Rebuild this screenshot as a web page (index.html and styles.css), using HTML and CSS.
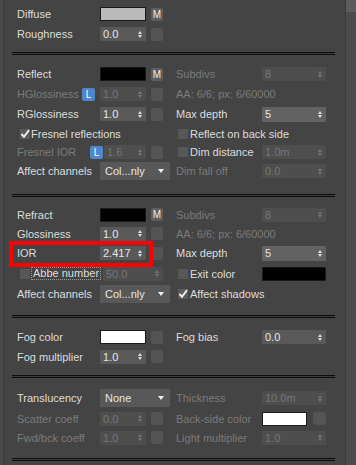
FILE: index.html
```html
<!DOCTYPE html>
<html>
<head>
  <title>Material</title>
  <link rel="stylesheet" href="styles.css">
</head>
<body>
  <div class="frame">
    <div class="edge"></div>
    <div class="panel">

      <div class="group g1">
        <div class="row r20">
          <div class="cl"><span class="lbl">Diffuse</span><span class="swatch grey"></span><span class="btn m">M</span></div>
        </div>
        <div class="row r20">
          <div class="cl"><span class="lbl">Roughness</span><span class="spin"><span>0.0</span><i class="arr"></i></span><span class="btn"></span></div>
        </div>
      </div>
      <div class="sep"></div>

      <div class="group g2">
        <div class="row r20">
          <div class="cl"><span class="lbl">Reflect</span><span class="swatch black"></span><span class="btn m">M</span></div>
          <div class="cr off"><span class="lbl">Subdivs</span><span class="spin wide dim"><span>8</span><i class="arr"></i></span></div>
        </div>
        <div class="row r20">
          <div class="cl"><span class="lbl off">HGlossiness</span><span class="lk">L</span><span class="spin dim"><span>1.0</span><i class="arr"></i></span><span class="btn"></span></div>
          <div class="cr off"><span class="lbl">AA: 6/6; px: 6/60000</span></div>
        </div>
        <div class="row r20">
          <div class="cl"><span class="lbl">RGlossiness</span><span class="spin"><span>1.0</span><i class="arr"></i></span><span class="btn"></span></div>
          <div class="cr"><span class="lbl">Max depth</span><span class="spin wide hi"><span>5</span><i class="arr"></i></span></div>
        </div>
        <div class="row r19">
          <div class="cl"><span class="chk on"><svg width="10" height="10" viewBox="0 0 10 10"><polyline points="1.5,5 4,7.8 9,1.2" fill="none" stroke="#eeeeee" stroke-width="2"/></svg></span><span class="lbl">Fresnel reflections</span></div>
          <div class="cr"><span class="chk r"></span><span class="lbl">Reflect on back side</span></div>
        </div>
        <div class="row r18">
          <div class="cl"><span class="lbl off">Fresnel IOR</span><span class="lk tight">L</span><span class="spin dim narrow"><span>1.6</span><i class="arr"></i></span><span class="btn"></span></div>
          <div class="cr"><span class="chk r"></span><span class="lbl">Dim distance</span><span class="spin wide dim"><span>1.0m</span><i class="arr"></i></span></div>
        </div>
        <div class="row r20">
          <div class="cl"><span class="lbl">Affect channels</span><span class="drop"><span>Col...nly</span><i class="tri"></i></span></div>
          <div class="cr off"><span class="lbl">Dim fall off</span><span class="spin wide dim"><span>0.0</span><i class="arr"></i></span></div>
        </div>
      </div>
      <div class="sep"></div>

      <div class="group g3">
        <div class="row r19">
          <div class="cl"><span class="lbl">Refract</span><span class="swatch black"></span><span class="btn m">M</span></div>
          <div class="cr off"><span class="lbl">Subdivs</span><span class="spin wide dim"><span>8</span><i class="arr"></i></span></div>
        </div>
        <div class="row r19">
          <div class="cl"><span class="lbl">Glossiness</span><span class="spin"><span>1.0</span><i class="arr"></i></span><span class="btn"></span></div>
          <div class="cr off"><span class="lbl">AA: 6/6; px: 6/60000</span></div>
        </div>
        <div class="row r20">
          <div class="cl marked"><span class="lbl">IOR</span><span class="spin"><span>2.417</span><i class="arr"></i></span><span class="btn"></span><span class="mark"></span></div>
          <div class="cr"><span class="lbl">Max depth</span><span class="spin wide hi"><span>5</span><i class="arr"></i></span></div>
        </div>
        <div class="row r21">
          <div class="cl"><span class="chk"></span><span class="lbl"><span class="focus">Abbe number</span></span><span class="spin dim long"><span>50.0</span><i class="arr"></i></span></div>
          <div class="cr"><span class="chk r"></span><span class="lbl">Exit color</span><span class="swatch black wide"></span></div>
        </div>
        <div class="row r20">
          <div class="cl"><span class="lbl">Affect channels</span><span class="drop"><span>Col...nly</span><i class="tri"></i></span></div>
          <div class="cr"><span class="chk r on"><svg width="10" height="10" viewBox="0 0 10 10"><polyline points="1.5,5 4,7.8 9,1.2" fill="none" stroke="#eeeeee" stroke-width="2"/></svg></span><span class="lbl">Affect shadows</span></div>
        </div>
      </div>
      <div class="sep"></div>

      <div class="group g4">
        <div class="row r20">
          <div class="cl"><span class="lbl">Fog color</span><span class="swatch white"></span><span class="btn"></span></div>
          <div class="cr"><span class="lbl">Fog bias</span><span class="spin wide"><span>0.0</span><i class="arr"></i></span></div>
        </div>
        <div class="row r19">
          <div class="cl"><span class="lbl">Fog multiplier</span><span class="spin"><span>1.0</span><i class="arr"></i></span><span class="btn"></span></div>
        </div>
      </div>
      <div class="sep"></div>

      <div class="group g5">
        <div class="row r22">
          <div class="cl"><span class="lbl">Translucency</span><span class="drop"><span>None</span><i class="tri"></i></span></div>
          <div class="cr off"><span class="lbl">Thickness</span><span class="spin wide dim"><span>10.0m</span><i class="arr"></i></span></div>
        </div>
        <div class="row r19">
          <div class="cl off"><span class="lbl">Scatter coeff</span><span class="spin dim"><span>0.0</span><i class="arr"></i></span><span class="btn"></span></div>
          <div class="cr off"><span class="lbl">Back-side color</span><span class="swatch white short"></span><span class="btn side"></span></div>
        </div>
        <div class="row r19">
          <div class="cl off"><span class="lbl">Fwd/bck coeff</span><span class="spin dim"><span>1.0</span><i class="arr"></i></span><span class="btn"></span></div>
          <div class="cr off"><span class="lbl">Light multiplier</span><span class="spin wide dim"><span>1.0</span><i class="arr"></i></span></div>
        </div>
      </div>
      <div class="sep"></div>

    </div>
    <div class="scroll"><div class="thumb"></div></div>
  </div>
</body>
</html>
```

FILE: styles.css
```css
body {
  margin: 0;
  background-color: #444444;
  font-family: "Liberation Sans", Arial, sans-serif;
  font-size: 11px;
  color: #dddddd;
}

.frame {
  display: flex;
  height: 465px;
  overflow: hidden;
}

.edge {
  width: 3px;
  background-color: #4a4a4a;
  border-right: 1px solid #393939;
}

.panel {
  flex: 1;
  padding-left: 8px;
}

.scroll {
  width: 10px;
  background-color: #4b4b4b;
  border-left: 1px solid #3a3a3a;
}

.thumb {
  height: 12px;
  background-color: #5c5c5c;
}

/* separators between groups */
.sep {
  width: 323px;
  height: 1px;
  background-color: #3c3c3c;
  border-top: 1px solid #0e0e0e;
  border-bottom: 1px solid #0e0e0e;
}

.group {
  padding-left: 5px;
}

.g1 { padding-top: 4px; padding-bottom: 8px; }
.g2 { padding-top: 9px; padding-bottom: 13px; }
.g3 { padding-top: 8px; padding-bottom: 11px; }
.g4 { padding-top: 9px; padding-bottom: 9px; }
.g5 { padding-top: 9px; padding-bottom: 11px; }

.row {
  display: flex;
  align-items: center;
}

.r18 { height: 18px; }
.r19 { height: 19px; }
.r20 { height: 20px; }
.r21 { height: 21px; }
.r22 { height: 22px; }

.cl {
  width: 153px;
  height: 100%;
  display: flex;
  align-items: center;
}

.cr {
  width: 150px;
  height: 100%;
  margin-left: 6px;
  display: flex;
  align-items: center;
}

.lbl {
  flex: 1;
  white-space: nowrap;
  overflow: hidden;
}

.off {
  color: #7b7b7b;
}

/* spinners */
.spin {
  width: 46px;
  height: 14px;
  box-sizing: border-box;
  padding: 0 3px;
  background-color: #595959;
  border-radius: 1px;
  display: flex;
  align-items: center;
  justify-content: space-between;
  color: #e6e6e6;
  white-space: nowrap;
}

.spin.dim {
  background-color: #4e4e4e;
  color: #777777;
}

.spin.hi {
  background-color: #626262;
  height: 15px;
}

.spin.wide { width: 64px; }
.spin.narrow { width: 42px; }
.spin.long { width: 60px; margin-right: 7px; }

.arr {
  display: flex;
  flex-direction: column;
  gap: 1px;
  margin-right: 1px;
}

.arr::before,
.arr::after {
  content: "";
  width: 0;
  height: 0;
  border-left: 2.5px solid transparent;
  border-right: 2.5px solid transparent;
}

.arr::before {
  border-bottom: 3px solid #dddddd;
}

.arr::after {
  border-top: 3px solid #dddddd;
}

.dim .arr::before { border-bottom-color: #777777; }
.dim .arr::after { border-top-color: #777777; }

/* colour swatches */
.swatch {
  width: 46px;
  height: 14px;
  box-sizing: border-box;
  border: 1px solid #1a1a1a;
}

.swatch.grey { background-color: #bababa; }
.swatch.black { background-color: #000000; }
.swatch.white { background-color: #ffffff; }
.swatch.wide { width: 64px; }
.swatch.short { width: 45px; }

/* map buttons */
.btn {
  width: 12px;
  height: 13px;
  margin-left: 5px;
  margin-right: 7px;
  border-radius: 2px;
  background-color: #545454;
}

.btn.m {
  background-color: #5e5e5e;
  color: #eeeeee;
  font-size: 10px;
  line-height: 13px;
  text-align: center;
}

.btn.side {
  width: 13px;
  margin-left: 6px;
  margin-right: 0;
}

.lk {
  width: 13px;
  height: 13px;
  margin-right: 5px;
  border-radius: 2px;
  background-color: #4f86cc;
  color: #ffffff;
  font-size: 10px;
  line-height: 13px;
  text-align: center;
}

.lk.tight {
  margin-right: 1px;
}

/* dropdowns */
.drop {
  width: 70px;
  height: 18px;
  box-sizing: border-box;
  padding: 0 6px 0 5px;
  background-color: #585858;
  display: flex;
  align-items: center;
  justify-content: space-between;
  color: #e6e6e6;
}

.tri {
  width: 0;
  height: 0;
  border-left: 3px solid transparent;
  border-right: 3px solid transparent;
  border-top: 4px solid #eeeeee;
}

/* checkboxes */
.chk {
  width: 10px;
  height: 10px;
  margin-left: 3px;
  margin-right: 1px;
  background-color: #575757;
  flex-shrink: 0;
  display: flex;
}

.chk.r {
  margin-left: 2px;
  margin-right: 2px;
}

.chk.on {
  background-color: #5a5a5a;
}

.focus {
  display: inline-block;
  padding: 0 1px;
  border: 1px dotted #9a9a9a;
  line-height: 11px;
}

/* red highlight round the IOR row */
.marked {
  position: relative;
}

.mark {
  position: absolute;
  left: -8px;
  top: -2px;
  width: 144px;
  height: 26px;
  box-sizing: border-box;
  border: 4px solid #ff0000;
}
```
